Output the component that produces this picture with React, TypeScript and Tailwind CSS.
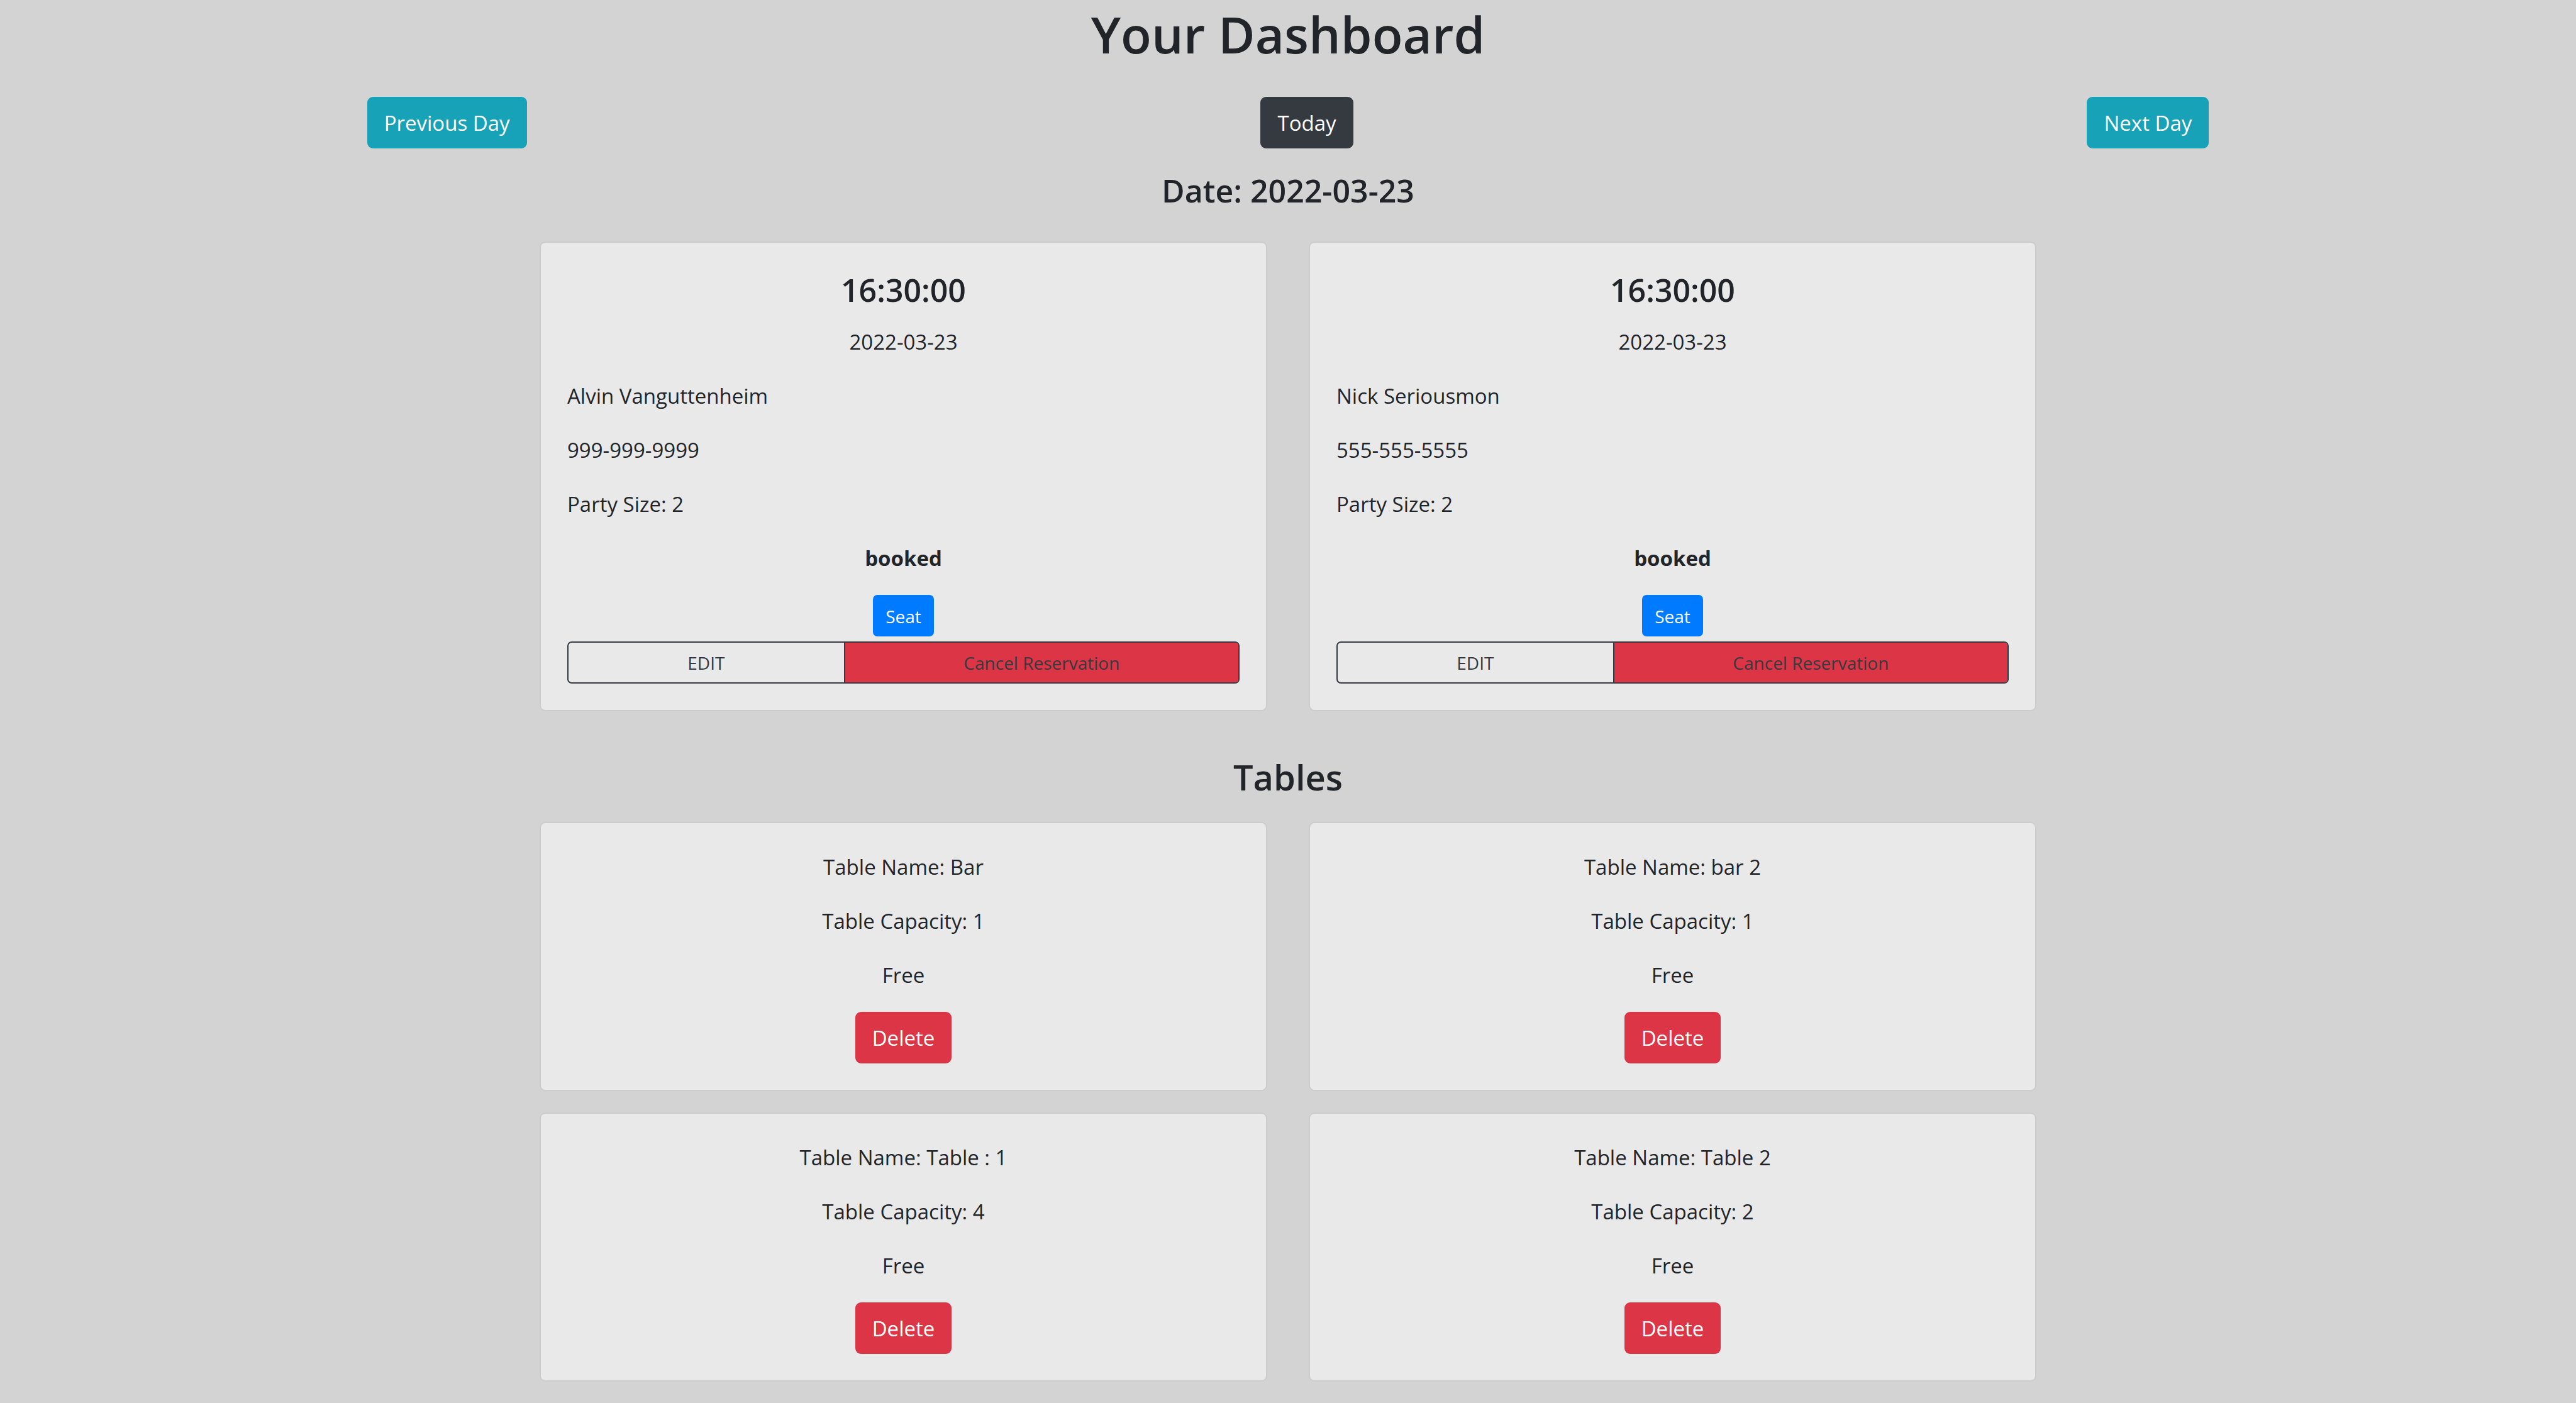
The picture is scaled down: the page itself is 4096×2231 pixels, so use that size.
import React from "react";

type Reservation = {
  time: string;
  date: string;
  name: string;
  phone: string;
  size: number;
  status: string;
};

type DiningTable = { name: string; capacity: number; status: string };

const reservations: Reservation[] = [
  {
    time: "16:30:00",
    date: "2022-03-23",
    name: "Alvin Vanguttenheim",
    phone: "999-999-9999",
    size: 2,
    status: "booked",
  },
  {
    time: "16:30:00",
    date: "2022-03-23",
    name: "Nick Seriousmon",
    phone: "555-555-5555",
    size: 2,
    status: "booked",
  },
];

const tables: DiningTable[] = [
  { name: "Bar", capacity: 1, status: "Free" },
  { name: "bar 2", capacity: 1, status: "Free" },
  { name: "Table : 1", capacity: 4, status: "Free" },
  { name: "Table 2", capacity: 2, status: "Free" },
];

const card =
  "flex flex-col rounded-[9px] border-2 border-[#cccccc] bg-[#e9e9e9] px-[42px] pt-[44px] pb-[42px]";
const button =
  "h-[82px] rounded-[9px] px-[27px] pt-[2px] text-[33px] leading-[52px] text-white";
const smallButton = "text-[28px] leading-[48px]";

function ReservationCard({ reservation }: { reservation: Reservation }) {
  return (
    <article className={card}>
      <h4 className="mb-[26px] text-center text-[50px] leading-[62px] font-semibold">
        {reservation.time}
      </h4>
      <div className="flex flex-col gap-[34px]">
        <p className="text-center">{reservation.date}</p>
        <p>{reservation.name}</p>
        <p>{reservation.phone}</p>
        <p>Party Size: {reservation.size}</p>
        <p className="text-center font-bold">{reservation.status}</p>
      </div>
      <button
        type="button"
        className={`mt-[32px] h-[66px] self-center rounded-[7px] bg-[#007bff] px-[20px] pt-[2px] text-white ${smallButton}`}
      >
        Seat
      </button>
      <div className="mt-[8px] flex h-[67px] overflow-hidden rounded-[7px] border-2 border-[#343a40] text-[#343a40]">
        <button
          type="button"
          className={`flex-[7] border-r-2 border-[#343a40] ${smallButton}`}
        >
          EDIT
        </button>
        <button type="button" className={`flex-[10] bg-[#dc3545] ${smallButton}`}>
          Cancel Reservation
        </button>
      </div>
    </article>
  );
}

function TableCard({ table }: { table: DiningTable }) {
  return (
    <article className={`${card} items-center text-center`}>
      <div className="flex flex-col gap-[34px]">
        <p>Table Name: {table.name}</p>
        <p>Table Capacity: {table.capacity}</p>
        <p>{table.status}</p>
      </div>
      <button type="button" className={`mt-[32px] bg-[#dc3545] ${button}`}>
        Delete
      </button>
    </article>
  );
}

export default function App() {
  return (
    <main className="flex min-h-screen flex-col items-center bg-[#d3d3d3] pb-[34px] font-['Open_Sans',sans-serif] text-[33px] leading-[52px] text-[#212529]">
      <h1 className="mt-[2px] text-[80px] leading-[104px] font-semibold">
        Your Dashboard
      </h1>
      <nav className="mt-[48px] flex w-[71.5%] justify-between">
        <button type="button" className={`${button} bg-[#17a2b8]`}>
          Previous Day
        </button>
        <button type="button" className={`${button} bg-[#343a40]`}>
          Today
        </button>
        <button type="button" className={`${button} bg-[#17a2b8]`}>
          Next Day
        </button>
      </nav>
      <h4 className="mt-[36px] mb-[50px] text-[50px] leading-[62px] font-semibold">
        Date: 2022-03-23
      </h4>
      <section className="grid w-full max-w-[2380px] grid-cols-2 gap-x-[66px] gap-y-[34px]">
        {reservations.map((reservation) => (
          <ReservationCard key={reservation.name} reservation={reservation} />
        ))}
      </section>
      <h3 className="mt-[68px] mb-[36px] text-[56px] leading-[72px] font-semibold">
        Tables
      </h3>
      <section className="grid w-full max-w-[2380px] grid-cols-2 gap-x-[66px] gap-y-[34px]">
        {tables.map((table) => (
          <TableCard key={table.name} table={table} />
        ))}
      </section>
    </main>
  );
}
